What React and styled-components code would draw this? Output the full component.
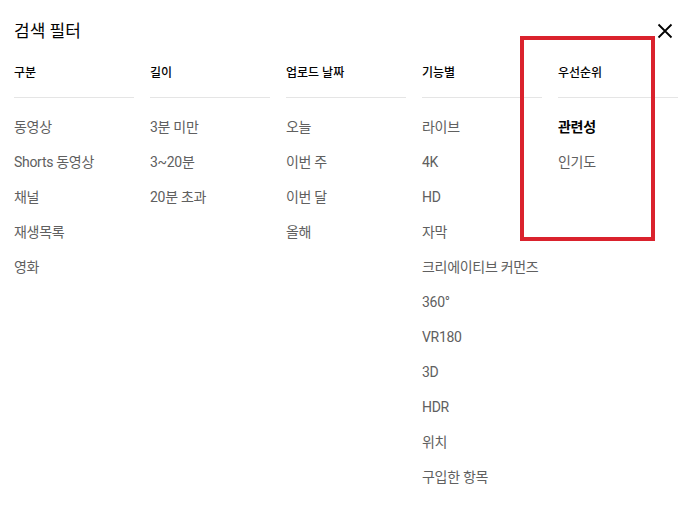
import React from "react";
import styled, { createGlobalStyle } from "styled-components";

const GlobalStyle = createGlobalStyle`
  html, body {
    margin: 0;
    padding: 0;
    background: #ffffff;
  }
  body {
    font-family: Roboto, "Noto Sans CJK KR", sans-serif;
    -webkit-font-smoothing: antialiased;
  }
`;

const Dialog = styled.div`
  position: relative;
  width: 691px;
  height: 505px;
  box-sizing: border-box;
  padding: 19px 13px 0 14px;
  background: #ffffff;
`;

const TitleRow = styled.div`
  display: flex;
  align-items: center;
  justify-content: space-between;
  height: 24px;
`;

const Title = styled.h2`
  margin: 0;
  font-size: 17px;
  font-weight: 400;
  line-height: 24px;
  color: #030303;
`;

const CloseButton = styled.button`
  display: flex;
  align-items: center;
  justify-content: center;
  width: 24px;
  height: 24px;
  margin-right: 1px;
  padding: 0;
  border: none;
  background: none;
  cursor: pointer;
`;

const Columns = styled.div`
  display: grid;
  grid-template-columns: repeat(5, 120px);
  column-gap: 16px;
  margin-top: 22px;
`;

const Group = styled.div`
  display: flex;
  flex-direction: column;
`;

const GroupHeader = styled.h4`
  margin: 0;
  padding-bottom: 16px;
  border-bottom: 1px solid #e5e5e5;
  font-size: 12px;
  font-weight: 500;
  line-height: 16px;
  color: #030303;
`;

const Options = styled.ul`
  list-style: none;
  margin: 0;
  padding: 11px 0 0;
`;

const Option = styled.li`
  display: flex;
  align-items: center;
  height: 35px;
  font-size: 14px;
  line-height: 20px;
  white-space: nowrap;
  letter-spacing: -0.3px;
  color: ${(props) => (props.selected ? "#030303" : "#606060")};
  font-weight: ${(props) => (props.selected ? 700 : 400)};
`;

const Highlight = styled.div`
  position: absolute;
  left: 520px;
  top: 36px;
  width: 135px;
  height: 205px;
  box-sizing: border-box;
  border: 4px solid #da222d;
  pointer-events: none;
`;

const filters = [
  { id: "type", name: "구분", options: ["동영상", "Shorts 동영상", "채널", "재생목록", "영화"] },
  { id: "duration", name: "길이", options: ["3분 미만", "3~20분", "20분 초과"] },
  { id: "upload", name: "업로드 날짜", options: ["오늘", "이번 주", "이번 달", "올해"] },
  {
    id: "features",
    name: "기능별",
    options: [
      "라이브",
      "4K",
      "HD",
      "자막",
      "크리에이티브 커먼즈",
      "360°",
      "VR180",
      "3D",
      "HDR",
      "위치",
      "구입한 항목",
    ],
  },
  { id: "sort", name: "우선순위", options: ["관련성", "인기도"], selected: "관련성" },
];

const CloseIcon = () => (
  <svg width="16" height="16" viewBox="0 0 16 16">
    <path d="M1.5 1.5 L14.5 14.5 M14.5 1.5 L1.5 14.5" stroke="#030303" strokeWidth="1.8" fill="none" />
  </svg>
);

const App = () => {
  return (
    <>
      <GlobalStyle />
      <Dialog>
        <TitleRow>
          <Title>검색 필터</Title>
          <CloseButton aria-label="닫기">
            <CloseIcon />
          </CloseButton>
        </TitleRow>

        <Columns>
          {filters.map((group) => (
            <Group key={group.id}>
              <GroupHeader>{group.name}</GroupHeader>
              <Options>
                {group.options.map((option) => (
                  <Option key={option} selected={option === group.selected}>
                    {option}
                  </Option>
                ))}
              </Options>
            </Group>
          ))}
        </Columns>

        <Highlight />
      </Dialog>
    </>
  );
};

export default App;
